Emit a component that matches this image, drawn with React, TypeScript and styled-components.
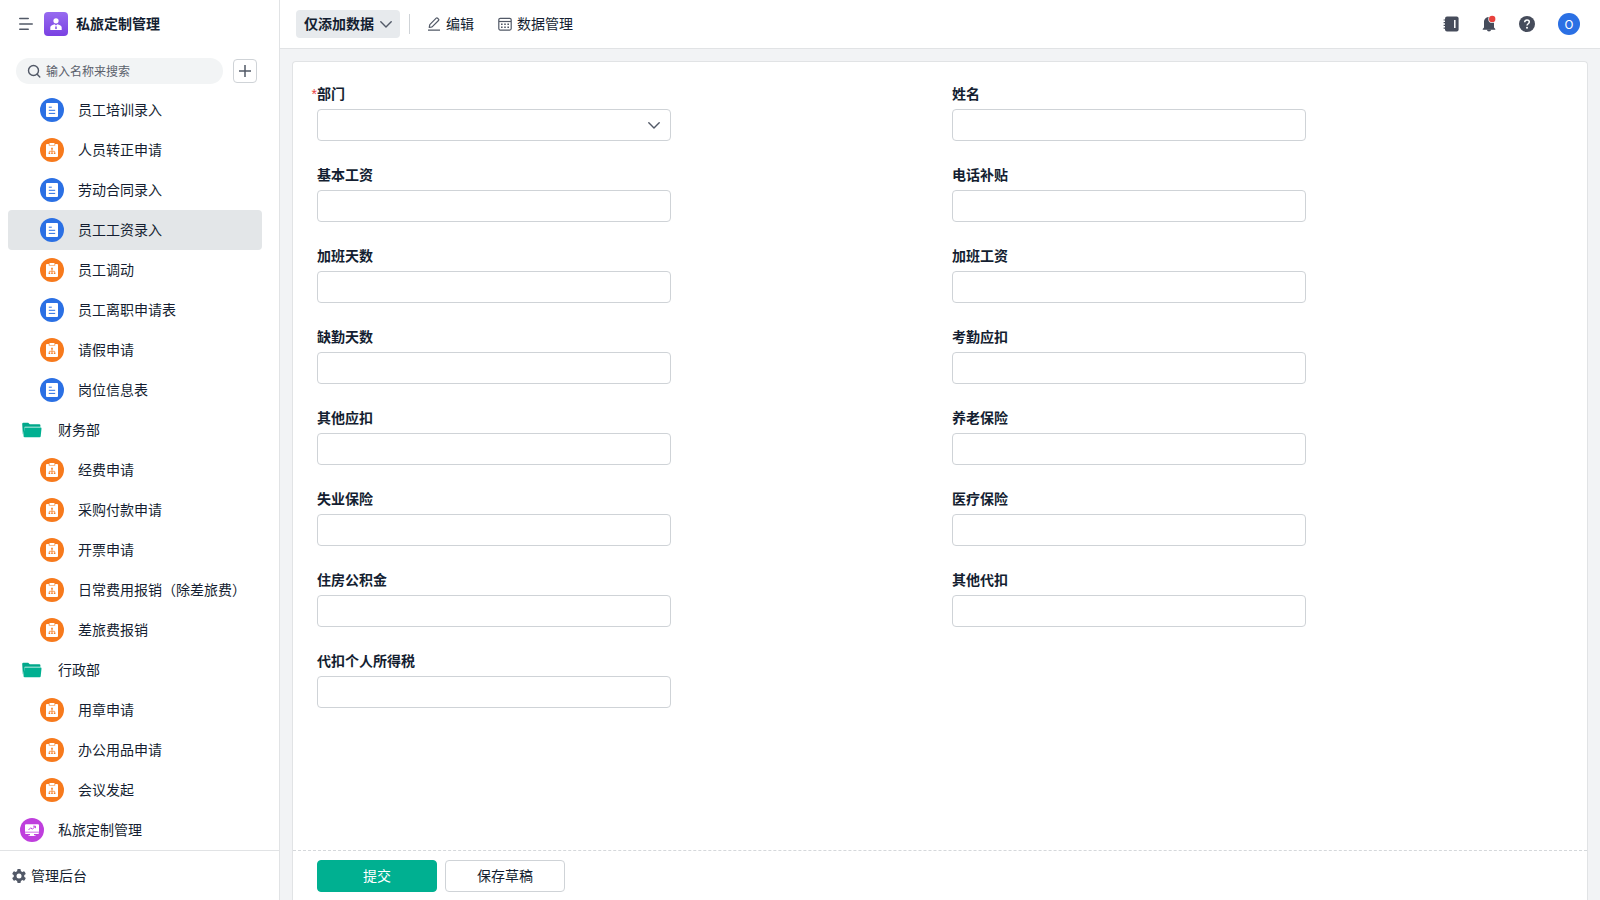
import React, { useState } from 'react';
import styled, { createGlobalStyle } from 'styled-components';

const color = {
  text: '#141e31',
  icon: '#525967',
  line: '#e1e3e5',
  control: '#cfd3d7',
  canvas: '#f2f3f5',
  hover: '#e3e6e8',
  green: '#00b091',
  blue: '#2b70e4',
  orange: '#f77a1d',
  purple: '#bf3fdd',
  red: '#e8413d',
};

const GlobalStyle = createGlobalStyle`
  *, *::before, *::after { box-sizing: border-box; }
  body { margin: 0; background: ${color.canvas}; }
  body, button, input, select {
    font-family: "Liberation Sans", "Noto Sans CJK SC", sans-serif;
    font-size: 14px;
    line-height: 20px;
    color: ${color.text};
  }
  svg { display: block; flex: none; }
`;

const Page = styled.div`
  display: flex;
  min-height: 100vh;
`;

const Sidebar = styled.aside`
  display: flex;
  flex-direction: column;
  flex: none;
  width: 280px;
  background: #fff;
  border-right: 1px solid ${color.line};
`;

const SidebarHeader = styled.div`
  display: flex;
  align-items: center;
  height: 48px;
  padding: 0 18px;
`;

const IconButton = styled.button`
  display: flex;
  align-items: center;
  justify-content: center;
  padding: 0;
  border: 0;
  background: none;
  cursor: pointer;
`;

const AppBadge = styled.span`
  display: flex;
  align-items: center;
  justify-content: center;
  width: 24px;
  height: 24px;
  margin: 0 8px 0 10px;
  border-radius: 4px;
  background: linear-gradient(180deg, #976bf0, #7a41e2);
`;

const AppTitle = styled.h1`
  margin: 0;
  font-size: 14px;
  line-height: 20px;
  font-weight: 600;
`;

const SearchRow = styled.div`
  display: flex;
  align-items: center;
  gap: 10px;
  height: 42px;
  padding: 4px 22px 0 16px;
`;

const SearchBox = styled.label`
  display: flex;
  align-items: center;
  flex: 1;
  gap: 5px;
  height: 26px;
  padding: 0 11px;
  border-radius: 13px;
  background: #f2f4f5;
`;

const SearchInput = styled.input`
  flex: 1;
  min-width: 0;
  padding: 0;
  border: 0;
  outline: 0;
  background: none;
  font-family: "Noto Sans CJK SC", sans-serif;
  font-size: 12px;
  line-height: 20px;
  &::placeholder { color: #5b616c; opacity: 1; }
`;

const AddButton = styled(IconButton)`
  width: 24px;
  height: 24px;
  border: 1px solid ${color.control};
  border-radius: 4px;
  background: #fff;
`;

const EntryList = styled.nav`
  flex: 1;
  padding: 0 17px 0 8px;
`;

const Entry = styled.a<{ $nested: boolean; $active: boolean }>`
  display: flex;
  align-items: center;
  gap: 14px;
  height: 40px;
  padding-left: ${(p) => (p.$nested ? 32 : 12)}px;
  border-radius: 4px;
  background: ${(p) => (p.$active ? color.hover : 'transparent')};
  color: inherit;
  text-decoration: none;
  white-space: nowrap;
`;

const EntryIcon = styled.span<{ $fill: string }>`
  display: flex;
  align-items: center;
  justify-content: center;
  flex: none;
  width: 24px;
  height: 24px;
  border-radius: 50%;
  background: ${(p) => p.$fill};
`;

const AdminLink = styled.a`
  display: flex;
  align-items: center;
  gap: 5px;
  height: 50px;
  padding: 0 12px;
  border-top: 1px solid ${color.line};
  color: inherit;
  text-decoration: none;
`;

const Main = styled.main`
  display: flex;
  flex-direction: column;
  flex: 1;
  min-width: 0;
`;

const TopBar = styled.header`
  display: flex;
  align-items: center;
  justify-content: space-between;
  height: 49px;
  padding: 0 20px 0 16px;
  border-bottom: 1px solid ${color.line};
  background: #fff;
`;

const BarGroup = styled.div<{ $gap: number }>`
  display: flex;
  align-items: center;
  gap: ${(p) => p.$gap}px;
`;

const ModeButton = styled(IconButton)`
  gap: 6px;
  height: 28px;
  padding: 0 8px;
  border-radius: 4px;
  background: #e7eaed;
  font-weight: 600;
`;

const Divider = styled.span`
  width: 1px;
  height: 20px;
  margin: 0 17px 0 9px;
  background: ${color.control};
`;

const BarButton = styled(IconButton)`
  gap: 5px;
`;

const Avatar = styled(IconButton)`
  width: 22px;
  height: 22px;
  border-radius: 50%;
  background: ${color.blue};
  color: #fff;
  font-family: "Noto Sans CJK SC", sans-serif;
  font-size: 12px;
`;

const FormCard = styled.form`
  display: flex;
  flex-direction: column;
  flex: 1;
  margin: 12px 12px 0;
  border: 1px solid ${color.line};
  border-bottom: 0;
  border-radius: 4px 4px 0 0;
  background: #fff;
`;

const Fields = styled.div`
  display: grid;
  grid-template-columns: 1fr 1fr;
  align-content: start;
  flex: 1;
  row-gap: 24px;
  padding: 22px 12px;
`;

const Field = styled.div`
  display: flex;
  flex-direction: column;
  gap: 5px;
  padding: 0 12px;
`;

const FieldLabel = styled.label`
  position: relative;
  font-weight: 600;
`;

const RequiredMark = styled.span`
  position: absolute;
  right: 100%;
  color: ${color.red};
  font-weight: 400;
`;

const TextInput = styled.input`
  width: 58%;
  height: 32px;
  padding: 0 10px;
  border: 1px solid ${color.control};
  border-radius: 4px;
  background: #fff;
`;

const SelectShell = styled.div`
  display: grid;
  align-items: center;
  width: 58%;
  > * { grid-area: 1 / 1; }
  > svg { justify-self: end; margin-right: 11px; pointer-events: none; }
`;

const SelectInput = styled.select`
  width: 100%;
  height: 32px;
  padding: 0 10px;
  border: 1px solid ${color.control};
  border-radius: 4px;
  background: #fff;
  appearance: none;
`;

const Actions = styled.div`
  display: flex;
  gap: 8px;
  height: 50px;
  padding: 9px 24px 8px;
  border-top: 1px dashed #d5d8db;
`;

const ActionButton = styled.button<{ $primary?: boolean }>`
  width: 120px;
  height: 32px;
  padding: 0;
  border: 1px solid ${(p) => (p.$primary ? color.green : color.control)};
  border-radius: 4px;
  background: ${(p) => (p.$primary ? color.green : '#fff')};
  color: ${(p) => (p.$primary ? '#fff' : color.text)};
  cursor: pointer;
`;

const MenuIcon = () => (
  <svg width="16" height="16" viewBox="0 0 16 16" stroke={color.icon} strokeWidth="1.6" strokeLinecap="round">
    <path d="M1.800 2.500h8.400M1.800 8h12.400M1.800 13.200h8.400" />
  </svg>
);

const PersonIcon = () => (
  <svg width="14" height="14" viewBox="0 0 14 14" fill="#fff">
    <circle cx="7" cy="3.800" r="2.600" />
    <path d="M1.300 13v-2.400c0-1.400.9-2.300 2.200-2.700L5.600 7.200 7 8.600l1.400-1.400 2.100.7c1.300.4 2.200 1.300 2.200 2.700V13z" />
    <path d="M6.500 9.200h1l.5 2.200-1 .9-1-.9z" fill="#8455e8" />
  </svg>
);

const SearchIcon = () => (
  <svg width="14" height="14" viewBox="0 0 14 14" fill="none" stroke={color.icon} strokeWidth="1.400" strokeLinecap="round">
    <circle cx="6.500" cy="6.500" r="5" />
    <path d="M10.200 10.300l2.600 2.700" />
  </svg>
);

const PlusIcon = () => (
  <svg width="14" height="14" viewBox="0 0 14 14" stroke={color.icon} strokeWidth="1.500">
    <path d="M1 7h12M7 1v12" />
  </svg>
);

const ChevronIcon = () => (
  <svg width="12" height="12" viewBox="0 0 12 12" fill="none" stroke={color.icon} strokeWidth="1.400" strokeLinecap="round" strokeLinejoin="round">
    <path d="M.8 3.800L6 9l5.200-5.200" />
  </svg>
);

const FormIcon = () => (
  <svg width="12" height="14" viewBox="0 0 12 14">
    <rect x="0" y="0" width="12" height="14" rx="1" fill="#fff" />
    <path d="M2.800 4.200h3M2.800 7.300h6.400M2.800 10.400h6.400" stroke={color.blue} />
  </svg>
);

const FlowIcon = () => (
  <svg width="12" height="14" viewBox="0 0 12 14">
    <path d="M1 1h1.800v1.600h6.400V1H11a1 1 0 0 1 1 1v11a1 1 0 0 1-1 1H1a1 1 0 0 1-1-1V2a1 1 0 0 1 1-1z" fill="#fff" />
    <rect x="3.500" y="0" width="5" height="2" fill="#fff" />
    <path d="M6 6v3.500M3.400 9.500V8.300h5.200v1.200" fill="none" stroke={color.orange} strokeWidth=".7" />
    <path d="M5.200 4.800h1.600v1.600H5.200zM2.600 9.500h1.600v1.600H2.600zM5.200 9.500h1.600v1.600H5.200zM7.800 9.500h1.600v1.600H7.800z" fill={color.orange} />
  </svg>
);

const BoardIcon = () => (
  <svg width="14" height="14" viewBox="0 0 14 14" fill="#fff">
    <path d="M1 1.200h12a1 1 0 0 1 1 1v6.600H0V2.200a1 1 0 0 1 1-1zM0 9.500h14v.6a1 1 0 0 1-1 1H9v1.100h1.500V13h-7v-.8H5v-1.100H1a1 1 0 0 1-1-1z" />
    <path d="M3.500 7l2.200-2.200 1.700 1.400 2.800-2.800M8.200 3.200h2.200v2" fill="none" stroke={color.purple} />
  </svg>
);

const FolderIcon = () => (
  <svg width="20" height="16" viewBox="0 0 20 16">
    <path d="M.2 2A1.200 1.200 0 0 1 1.400.8h4.800L7.800 2.300h9.600a1 1 0 0 1 1 1v1.500H2.700L1.300 13 .8 12z" fill="#00a88b" />
    <path d="M3.200 5.600h15.500a.8.800 0 0 1 .8.900l-.8 7.800a1 1 0 0 1-1 .9H2.500a1 1 0 0 1-1-1.100l.9-7.800a.8.800 0 0 1 .8-.7z" fill={color.green} />
  </svg>
);

const GearIcon = () => (
  <svg width="14" height="14" viewBox="0 0 14 14">
    <g fill={color.icon}>
      <circle cx="7" cy="7" r="5.300" />
      {[0, 60, 120].map((a) => (
        <rect key={a} x="5.200" y="0" width="3.600" height="14" rx=".9" transform={`rotate(${a} 7 7)`} />
      ))}
    </g>
    <circle cx="7" cy="7" r="2.500" fill="#fff" />
  </svg>
);

const PencilIcon = () => (
  <svg width="14" height="14" viewBox="0 0 14 14" fill="none" stroke={color.icon} strokeWidth="1.200" strokeLinejoin="round">
    <path d="M2.200 10.500l.6-2.900 6.400-6.400a1 1 0 0 1 1.400 0l.9.900a1 1 0 0 1 0 1.400L5.100 9.900zM1 13.200h12" />
  </svg>
);

const TableIcon = () => (
  <svg width="14" height="14" viewBox="0 0 14 14" fill="none" stroke={color.icon} strokeWidth="1.200">
    <rect x=".8" y="1.300" width="12.400" height="11.800" rx="1.500" />
    <path d="M1 4.500h12" />
    <path d="M3 7.300h8M3 10.200h8" strokeWidth="1.400" strokeDasharray="1.600 1.600" />
  </svg>
);

const NotebookIcon = () => (
  <svg width="16" height="16" viewBox="0 0 16 16">
    <rect x="2" y=".6" width="13.600" height="15" rx="2" fill="#464c5b" />
    <path d="M.6 4h2.600M.6 6.700h2.600M.6 9.400h2.600M.6 12.100h2.600" stroke="#464c5b" strokeWidth="1.200" />
    <path d="M11.800 4v8" stroke="#fff" strokeWidth="1.500" />
  </svg>
);

const BellIcon = () => (
  <svg width="16" height="18" viewBox="0 0 16 18">
    <path d="M8 2c3 0 5 2.200 5 5.200v5.200l1.300 1.600v.7H1.700V14L3 12.400V7.200C3 4.200 5 2 8 2z" fill="#464c5b" />
    <path d="M5.900 14.500h4.200a2.100 2.100 0 0 1-4.200 0z" fill="#464c5b" />
    <circle cx="11.200" cy="3.900" r="3.900" fill="#fff" />
    <circle cx="11.200" cy="3.900" r="3.200" fill={color.red} />
  </svg>
);

const HelpIcon = () => (
  <svg width="16" height="16" viewBox="0 0 16 16">
    <circle cx="8" cy="8" r="8" fill="#464c5b" />
    <path d="M5.700 6.200c0-1.300 1-2.200 2.300-2.200s2.300.9 2.300 2.100c0 1.600-2.300 1.700-2.300 3.400" fill="none" stroke="#fff" strokeWidth="1.500" />
    <circle cx="8" cy="11.800" r="1" fill="#fff" />
  </svg>
);

type Kind = 'form' | 'flow' | 'folder' | 'board';

const entries: { kind: Kind; name: string }[] = [
  { kind: 'form', name: '员工培训录入' },
  { kind: 'flow', name: '人员转正申请' },
  { kind: 'form', name: '劳动合同录入' },
  { kind: 'form', name: '员工工资录入' },
  { kind: 'flow', name: '员工调动' },
  { kind: 'form', name: '员工离职申请表' },
  { kind: 'flow', name: '请假申请' },
  { kind: 'form', name: '岗位信息表' },
  { kind: 'folder', name: '财务部' },
  { kind: 'flow', name: '经费申请' },
  { kind: 'flow', name: '采购付款申请' },
  { kind: 'flow', name: '开票申请' },
  { kind: 'flow', name: '日常费用报销（除差旅费）' },
  { kind: 'flow', name: '差旅费报销' },
  { kind: 'folder', name: '行政部' },
  { kind: 'flow', name: '用章申请' },
  { kind: 'flow', name: '办公用品申请' },
  { kind: 'flow', name: '会议发起' },
  { kind: 'board', name: '私旅定制管理' },
];

const kinds: Record<Kind, { fill: string; icon: React.ReactNode }> = {
  form: { fill: color.blue, icon: <FormIcon /> },
  flow: { fill: color.orange, icon: <FlowIcon /> },
  folder: { fill: 'transparent', icon: <FolderIcon /> },
  board: { fill: color.purple, icon: <BoardIcon /> },
};

const textFields = [
  '姓名', '基本工资', '电话补贴', '加班天数', '加班工资', '缺勤天数', '考勤应扣',
  '其他应扣', '养老保险', '失业保险', '医疗保险', '住房公积金', '其他代扣', '代扣个人所得税',
];

export default function App() {
  const [active, setActive] = useState('员工工资录入');

  return (
    <Page>
      <GlobalStyle />
      <Sidebar>
        <SidebarHeader>
          <IconButton type="button" aria-label="菜单"><MenuIcon /></IconButton>
          <AppBadge><PersonIcon /></AppBadge>
          <AppTitle>私旅定制管理</AppTitle>
        </SidebarHeader>
        <SearchRow>
          <SearchBox>
            <SearchIcon />
            <SearchInput type="text" aria-label="搜索" placeholder="输入名称来搜索" />
          </SearchBox>
          <AddButton type="button" aria-label="新建"><PlusIcon /></AddButton>
        </SearchRow>
        <EntryList>
          {entries.map(({ kind, name }) => (
            <Entry
              key={kind + name}
              href="#"
              $nested={kind === 'form' || kind === 'flow'}
              $active={name === active}
              onClick={(e) => {
                e.preventDefault();
                setActive(name);
              }}
            >
              <EntryIcon $fill={kinds[kind].fill}>{kinds[kind].icon}</EntryIcon>
              {name}
            </Entry>
          ))}
        </EntryList>
        <AdminLink href="#"><GearIcon />管理后台</AdminLink>
      </Sidebar>

      <Main>
        <TopBar>
          <BarGroup $gap={0}>
            <ModeButton type="button">仅添加数据<ChevronIcon /></ModeButton>
            <Divider />
            <BarGroup $gap={24}>
              <BarButton type="button"><PencilIcon />编辑</BarButton>
              <BarButton type="button"><TableIcon />数据管理</BarButton>
            </BarGroup>
          </BarGroup>
          <BarGroup $gap={23}>
            <BarGroup $gap={22}>
              <IconButton type="button" aria-label="通讯录"><NotebookIcon /></IconButton>
              <IconButton type="button" aria-label="通知"><BellIcon /></IconButton>
              <IconButton type="button" aria-label="帮助"><HelpIcon /></IconButton>
            </BarGroup>
            <Avatar type="button">O</Avatar>
          </BarGroup>
        </TopBar>

        <FormCard onSubmit={(e) => e.preventDefault()}>
          <Fields>
            <Field>
              <FieldLabel htmlFor="department"><RequiredMark>*</RequiredMark>部门</FieldLabel>
              <SelectShell>
                <SelectInput id="department" />
                <ChevronIcon />
              </SelectShell>
            </Field>
            {textFields.map((label, i) => (
              <Field key={label}>
                <FieldLabel htmlFor={`field-${i}`}>{label}</FieldLabel>
                <TextInput id={`field-${i}`} type="text" />
              </Field>
            ))}
          </Fields>
          <Actions>
            <ActionButton type="submit" $primary>提交</ActionButton>
            <ActionButton type="button">保存草稿</ActionButton>
          </Actions>
        </FormCard>
      </Main>
    </Page>
  );
}
